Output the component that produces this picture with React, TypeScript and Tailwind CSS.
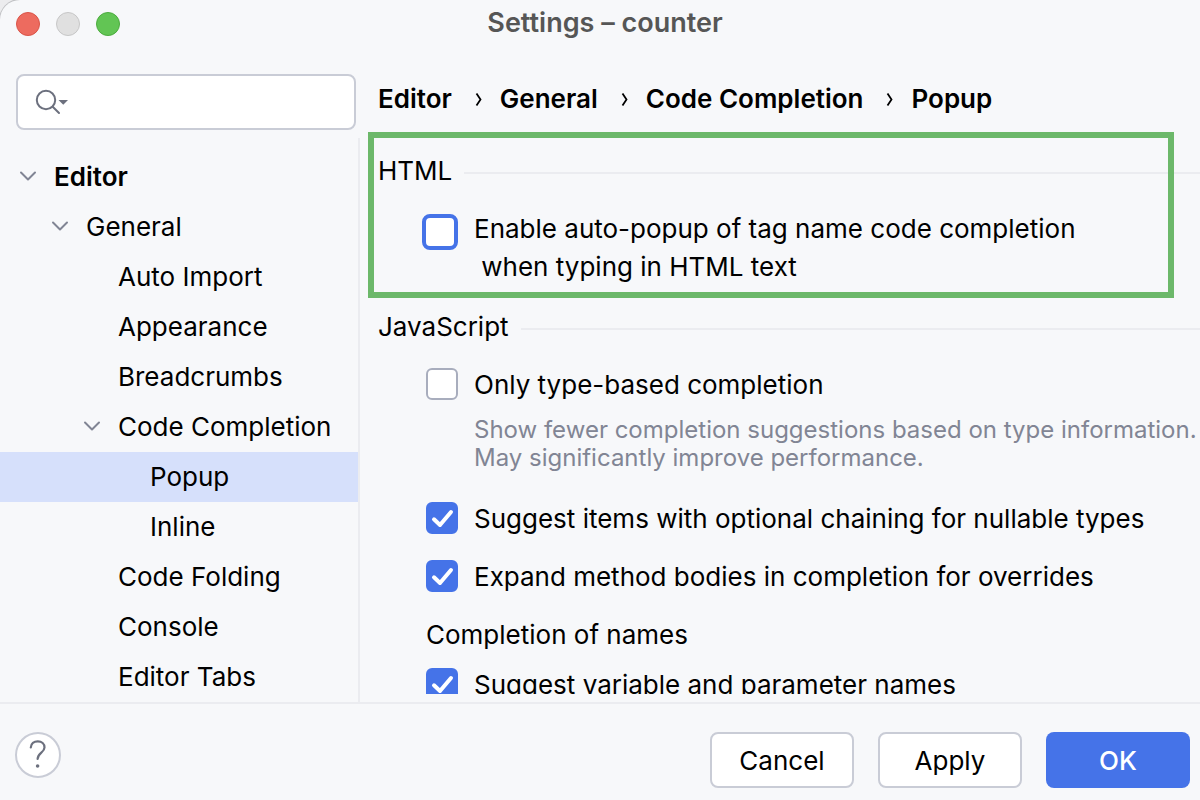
import { useState } from "react";
import clsx from "clsx";

const tree = [
  { label: "Editor", level: 0, open: true },
  { label: "General", level: 1, open: true },
  { label: "Auto Import", level: 2 },
  { label: "Appearance", level: 2 },
  { label: "Breadcrumbs", level: 2 },
  { label: "Code Completion", level: 2, open: true },
  { label: "Popup", level: 3 },
  { label: "Inline", level: 3 },
  { label: "Code Folding", level: 2 },
  { label: "Console", level: 2 },
  { label: "Editor Tabs", level: 2 },
];

const indents = ["pl-4", "pl-12", "pl-20", "pl-28"];

const crumbs = ["Editor", "General", "Code Completion", "Popup"];

const Chevron = () => (
  <svg className="w-6 h-6" viewBox="0 0 24 24" fill="none" stroke="#818594" strokeWidth="2" strokeLinecap="round" strokeLinejoin="round">
    <path d="M5 8.5L12 15.500L19 8.500" />
  </svg>
);

const SearchBox = () => (
  <label className="ml-4 mr-1 h-14 flex items-center pl-4 bg-white border-2 border-[#c9ccd6] rounded-lg">
    <svg className="w-9 h-8 shrink-0" viewBox="0 0 36 32" fill="none">
      <circle cx="12" cy="14" r="9.200" stroke="#6c707e" strokeWidth="2" />
      <path d="M18.700 20.700L25 27" stroke="#6c707e" strokeWidth="2" strokeLinecap="round" />
      <path d="M24.500 14H34L29.250 18.800Z" fill="#6c707e" />
    </svg>
    <input type="text" aria-label="Search settings" className="flex-1 min-w-0 h-full bg-transparent outline-none" />
  </label>
);

const Sidebar = () => {
  const [selected, setSelected] = useState("Popup");

  return (
    <aside className="w-[360px] shrink-0 flex flex-col pt-[26px]">
      <SearchBox />
      <nav className="flex-1 min-h-0 mt-2 pt-3.5 border-r-2 border-[#ebecf0] overflow-hidden">
        {tree.map((item) => (
          <button
            key={item.label}
            onClick={() => setSelected(item.label)}
            className={clsx(
              "w-full h-[50px] pb-0.5 flex items-center gap-3.5 text-left",
              indents[item.level],
              item.level === 0 && "font-semibold",
              selected === item.label && "bg-[#d6e0fb]"
            )}
          >
            <span className="w-6 h-6 shrink-0">{item.open && <Chevron />}</span>
            {item.label}
          </button>
        ))}
      </nav>
    </aside>
  );
};

const GroupTitle = ({ children }: { children: string }) => (
  <div className="flex items-center gap-3 pl-[18px]">
    <h2 className="leading-8">{children}</h2>
    <div className="flex-1 h-0.5 mt-1 bg-[#ebecf0]" />
  </div>
);

interface OptionProps {
  label: string;
  checked?: boolean;
  focused?: boolean;
}

const Option = ({ label, checked = false, focused = false }: OptionProps) => {
  const [on, setOn] = useState(checked);

  return (
    <label className="flex items-start gap-4">
      <span className={clsx("grid shrink-0", focused ? "w-9 h-9 -ml-1" : "w-8 h-8")}>
        <input
          type="checkbox"
          checked={on}
          onChange={() => setOn(!on)}
          className={clsx(
            "col-start-1 row-start-1 w-full h-full appearance-none bg-white checked:bg-[#4573e8] checked:border-[#4573e8]",
            focused ? "border-4 border-[#4573e8] rounded-lg" : "border-2 border-[#a8adbd] rounded-md"
          )}
        />
        {on && (
          <svg className="col-start-1 row-start-1 w-full h-full pointer-events-none" viewBox="0 0 32 32" fill="none" stroke="white" strokeWidth="4" strokeLinecap="round" strokeLinejoin="round">
            <path d="M8 17.300L14 23L25 10" />
          </svg>
        )}
      </span>
      <span className={clsx("whitespace-pre-line", focused ? "leading-[38px] -mt-1" : "leading-[34px]")}>{label}</span>
    </label>
  );
};

const Content = () => (
  <main className="flex-1 min-w-0 mb-2 overflow-hidden">
    <ol className="flex h-[84px] pt-[34px] pl-[18px] font-semibold whitespace-nowrap">
      {crumbs.map((crumb, i) => (
        <li key={crumb} className="flex leading-[34px]">
          {i > 0 && (
            <svg className="w-12 h-[34px]" viewBox="0 0 48 34" fill="none" stroke="black" strokeWidth="1.800">
              <path d="M24.500 11.500L28.500 17.500L24.500 23.500" />
            </svg>
          )}
          <a href="#">{crumb}</a>
        </li>
      ))}
    </ol>

    <section className="relative h-[166px] pt-[23px]">
      <GroupTitle>HTML</GroupTitle>
      <div className="pl-[66px] pt-[27px]">
        <Option focused label={"Enable auto-popup of tag name code completion\n\u00a0when typing in HTML text"} />
      </div>
      <div className="absolute inset-y-0 left-2 right-[26px] border-[6px] border-[#6cb86a] pointer-events-none" />
    </section>

    <section className="pt-[13px]">
      <GroupTitle>JavaScript</GroupTitle>
      <div className="pl-[66px] pt-[25px]">
        <Option label="Only type-based completion" />
        <p className="pl-12 pt-3.5 text-2xl leading-7 text-[#818594] whitespace-nowrap">
          Show fewer completion suggestions based on type information.
          <br />
          May significantly improve performance.
        </p>
        <div className="pt-[30px] flex flex-col gap-6">
          <Option checked label="Suggest items with optional chaining for nullable types" />
          <Option checked label="Expand method bodies in completion for overrides" />
          <h3 className="leading-[34px]">Completion of names</h3>
        </div>
        <div className="pt-4">
          <Option checked label="Suggest variable and parameter names" />
        </div>
      </div>
    </section>
  </main>
);

const Footer = () => (
  <footer className="h-[98px] shrink-0 border-t-2 border-[#ebecf0] flex items-start justify-between pt-7 pl-[15px] pr-2.5">
    <button aria-label="Help" className="w-[46px] h-[46px] flex items-center justify-center rounded-full bg-white border-2 border-[#c9ccd6]">
      <svg className="w-8 h-8" viewBox="0 0 32 32" fill="none">
        <path d="M8.800 8.500C9 4.500 12 2.300 15.800 2.300C19.800 2.300 22.500 4.900 22.500 8.400C22.500 13.500 15.600 13.800 15.600 20" stroke="#6c707e" strokeWidth="2.200" strokeLinecap="round" />
        <circle cx="15.600" cy="27" r="1.800" fill="#6c707e" />
      </svg>
    </button>
    <div className="flex gap-6">
      <button className="w-36 h-14 rounded-lg bg-white border-2 border-[#c9ccd6]">Cancel</button>
      <button className="w-36 h-14 rounded-lg bg-white border-2 border-[#c9ccd6]">Apply</button>
      <button className="w-36 h-14 rounded-lg bg-[#4573e8] text-white font-medium">OK</button>
    </div>
  </footer>
);

export default function App() {
  return (
    <div className="h-screen bg-[#ececee]">
      <div className="h-full flex flex-col overflow-hidden rounded-tl-[20px] shadow-[0_0_0_1px_#c0c1c4] bg-[#f7f8fa] text-black text-[26px] font-['Inter',sans-serif]">
        <header className="h-12 shrink-0 grid grid-cols-[1fr_auto_1fr] items-center px-4">
          <div className="flex gap-4">
            <button aria-label="Close" className="w-6 h-6 rounded-full bg-[#ed6b5f] border border-[#d95448]" />
            <button aria-label="Minimize" className="w-6 h-6 rounded-full bg-[#e0e0e0] border border-[#c6c6c6]" />
            <button aria-label="Zoom" className="w-6 h-6 rounded-full bg-[#62c554] border border-[#4cab3e]" />
          </div>
          <h1 className="pl-2.5 pb-0.5 text-[27px] font-semibold leading-[46px] text-[#565656]">Settings – counter</h1>
        </header>
        <div className="flex-1 min-h-0 flex">
          <Sidebar />
          <Content />
        </div>
        <Footer />
      </div>
    </div>
  );
}
